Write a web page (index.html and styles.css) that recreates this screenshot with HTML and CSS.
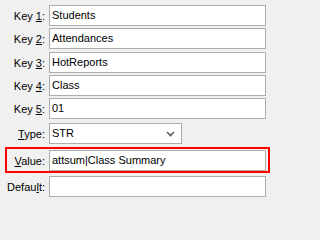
FILE: index.html
```html
<!DOCTYPE html>
<html>
<head>
<meta charset="utf-8">
<link rel="stylesheet" href="styles.css">
</head>
<body>
<div class="form">
  <div class="row r1"><label class="lbl">Key <u>1</u>:</label><div class="box">Students</div></div>
  <div class="row r2"><label class="lbl">Key <u>2</u>:</label><div class="box">Attendances</div></div>
  <div class="row r3"><label class="lbl">Key <u>3</u>:</label><div class="box">HotReports</div></div>
  <div class="row r4"><label class="lbl">Key <u>4</u>:</label><div class="box">Class</div></div>
  <div class="row r5"><label class="lbl">Key <u>5</u>:</label><div class="box">01</div></div>
  <div class="row r6"><label class="lbl"><u>T</u>ype:</label><div class="box select"><span>STR</span><svg class="chev" width="9" height="6" viewBox="0 0 9 6"><path d="M1 1 L4.5 4.5 L8 1" fill="none" stroke="#5a5a5a" stroke-width="1.6"/></svg></div></div>
  <div class="highlight"><div class="row"><label class="lbl hl"><u>V</u>alue:</label><div class="box">attsum|Class Summary</div></div></div>
  <div class="row r8"><label class="lbl">Defau<u>l</u>t:</label><div class="box"></div></div>
</div>
</body>
</html>
```
FILE: styles.css
```css
html, body {
  margin: 0;
  padding: 0;
  background: #f0f0f0;
}
body {
  width: 271px;
  height: 202px;
  overflow: hidden;
  font-family: "Liberation Sans", Arial, sans-serif;
  font-size: 11px;
  color: #000;
}
.form {
  padding-top: 5px;
  display: flex;
  flex-direction: column;
}
.row {
  display: flex;
  align-items: center;
}
.r2 { margin-top: 2px; }
.r3 { margin-top: 3px; }
.r4 { margin-top: 2px; }
.r5 { margin-top: 2px; }
.r6 { margin-top: 4px; }
.r8 { margin-top: 3px; }
.lbl {
  width: 45px;
  text-align: right;
  margin-right: 4px;
  flex: none;
}
.lbl.hl {
  width: 38px;
}
.lbl u {
  text-decoration-thickness: 1px;
  text-underline-offset: 1px;
}
.box {
  box-sizing: border-box;
  width: 217px;
  height: 21px;
  border: 1px solid #adadad;
  background: #fff;
  padding: 0 2px;
  line-height: 19px;
  white-space: nowrap;
  flex: none;
}
.select {
  width: 133px;
  display: flex;
  align-items: center;
  justify-content: space-between;
  padding-right: 6px;
}
.chev {
  display: block;
  margin-top: 1px;
}
.highlight {
  box-sizing: border-box;
  margin-top: 3px;
  margin-left: 5px;
  width: 265px;
  height: 26px;
  border: 2px solid #f00;
  padding: 1px 1px 0 0;
}
```
